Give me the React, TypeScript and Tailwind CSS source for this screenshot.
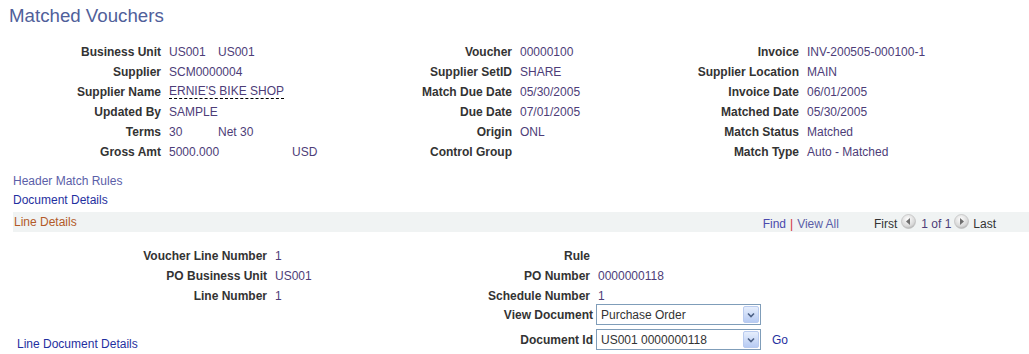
import React from "react";

const F = { fontFamily: '"Liberation Sans", Arial, sans-serif' };

function Row({ label, children, lw }: { label: string; children?: React.ReactNode; lw: string }) {
  return (
    <div className="flex h-5 items-center">
      <div className={`${lw} shrink-0 text-right font-bold text-[#333333]`}>{label}</div>
      <div className="ml-2 flex text-[#4d3d78]">{children}</div>
    </div>
  );
}

function Circle({ dir }: { dir: "l" | "r" }) {
  return (
    <svg width="15" height="15" viewBox="0 0 15 15" className="inline-block">
      <defs>
        <radialGradient id={`g${dir}`} cx="45%" cy="35%" r="70%">
          <stop offset="0%" stopColor="#ffffff" />
          <stop offset="70%" stopColor="#d8d8d8" />
          <stop offset="100%" stopColor="#a8a8a8" />
        </radialGradient>
      </defs>
      <circle cx="7.5" cy="7.5" r="7" fill={`url(#g${dir})`} stroke="#b8b8b8" strokeWidth="0.6" />
      {dir === "l" ? (
        <polygon points="9,4 9,11 5,7.5" fill="#6e6e6e" />
      ) : (
        <polygon points="6,4 6,11 10,7.5" fill="#6e6e6e" />
      )}
    </svg>
  );
}

function Select({ value }: { value: string }) {
  return (
    <div className="flex h-[21px] w-[165px] items-center border border-[#7f9db9] bg-white pl-1">
      <span className="flex-1 text-[#333333]">{value}</span>
      <div className="mr-[1px] flex h-[17px] w-[16px] items-center justify-center rounded-[2px] border border-[#b9cbef] bg-gradient-to-b from-[#e6eefc] to-[#b7cbf3]">
        <svg width="8" height="6" viewBox="0 0 8 6">
          <polyline points="1,1.5 4,4.5 7,1.5" fill="none" stroke="#4d6185" strokeWidth="1.6" />
        </svg>
      </div>
    </div>
  );
}

export default function App() {
  return (
    <div className="h-[354px] w-[1029px] bg-white text-[12px] leading-none" style={F}>
      <div className="pl-[9px] pt-[6px] text-[18.7px] leading-[20px] text-[#50609a]">Matched Vouchers</div>

      <div className="mt-[16px] flex">
        <div className="w-[359px]">
          <Row label="Business Unit" lw="w-[161px]">
            <span className="w-[49px]">US001</span>
            <span>US001</span>
          </Row>
          <Row label="Supplier" lw="w-[161px]">SCM0000004</Row>
          <Row label="Supplier Name" lw="w-[161px]">
            <span className="border-b border-dashed border-black pb-[1px]">ERNIE'S BIKE SHOP</span>
          </Row>
          <Row label="Updated By" lw="w-[161px]">SAMPLE</Row>
          <Row label="Terms" lw="w-[161px]">
            <span className="w-[49px]">30</span>
            <span>Net 30</span>
          </Row>
          <Row label="Gross Amt" lw="w-[161px]">
            <span className="w-[123px]">5000.000</span>
            <span>USD</span>
          </Row>
        </div>
        <div className="w-[321px]">
          <Row label="Voucher" lw="w-[153px]">00000100</Row>
          <Row label="Supplier SetID" lw="w-[153px]">SHARE</Row>
          <Row label="Match Due Date" lw="w-[153px]">05/30/2005</Row>
          <Row label="Due Date" lw="w-[153px]">07/01/2005</Row>
          <Row label="Origin" lw="w-[153px]">ONL</Row>
          <Row label="Control Group" lw="w-[153px]" />
        </div>
        <div>
          <Row label="Invoice" lw="w-[119px]">INV-200505-000100-1</Row>
          <Row label="Supplier Location" lw="w-[119px]">MAIN</Row>
          <Row label="Invoice Date" lw="w-[119px]">06/01/2005</Row>
          <Row label="Matched Date" lw="w-[119px]">05/30/2005</Row>
          <Row label="Match Status" lw="w-[119px]">Matched</Row>
          <Row label="Match Type" lw="w-[119px]">Auto - Matched</Row>
        </div>
      </div>

      <div className="mt-[9px] pl-[13px]">
        <div className="flex h-[19px] items-center text-[#5b5ea8]">Header Match Rules</div>
        <div className="flex h-[19px] items-center text-[#1f30a0]">Document Details</div>
      </div>

      <div className="ml-[13px] mt-[3px] flex h-[20px] items-center bg-[#f0f3f3] pl-[1px]">
        <span className="text-[#b35a28]">Line Details</span>
        <div className="ml-auto flex items-center pr-[33px] pt-[3px]">
          <span className="text-[#4b49ad]">Find</span>
          <span className="mx-[4px] text-[#d0303a]">|</span>
          <span className="text-[#5b5ea8]">View All</span>
          <span className="ml-[35px] text-[#333333]">First</span>
          <span className="ml-[4px] mt-[-5px]"><Circle dir="l" /></span>
          <span className="ml-[5px] text-[#4d3d78]">1 of 1</span>
          <span className="ml-[3px] mt-[-5px]"><Circle dir="r" /></span>
          <span className="ml-[4px] text-[#333333]">Last</span>
        </div>
      </div>

      <div className="mt-[14px] flex">
        <div className="w-[322px]">
          <Row label="Voucher Line Number" lw="w-[267px]">1</Row>
          <Row label="PO Business Unit" lw="w-[267px]">US001</Row>
          <Row label="Line Number" lw="w-[267px]">1</Row>
        </div>
        <div>
          <Row label="Rule" lw="w-[268px]" />
          <Row label="PO Number" lw="w-[268px]">0000000118</Row>
          <Row label="Schedule Number" lw="w-[268px]">1</Row>
        </div>
      </div>

      <div className="mt-[-2px] flex items-center">
        <div className="w-[275px]" />
        <div className="w-[319px] pr-[1px] text-right font-bold text-[#333333]">View Document</div>
        <div className="ml-[2px]"><Select value="Purchase Order" /></div>
      </div>
      <div className="mt-[4px] flex items-center">
        <div className="w-[275px] pl-[17px] pt-[8px] text-[#1f30a0]">Line Document Details</div>
        <div className="w-[319px] pr-[1px] text-right font-bold text-[#333333]">Document Id</div>
        <div className="ml-[2px]"><Select value="US001 0000000118" /></div>
        <span className="ml-[11px] text-[#1f30a0]">Go</span>
      </div>
    </div>
  );
}
